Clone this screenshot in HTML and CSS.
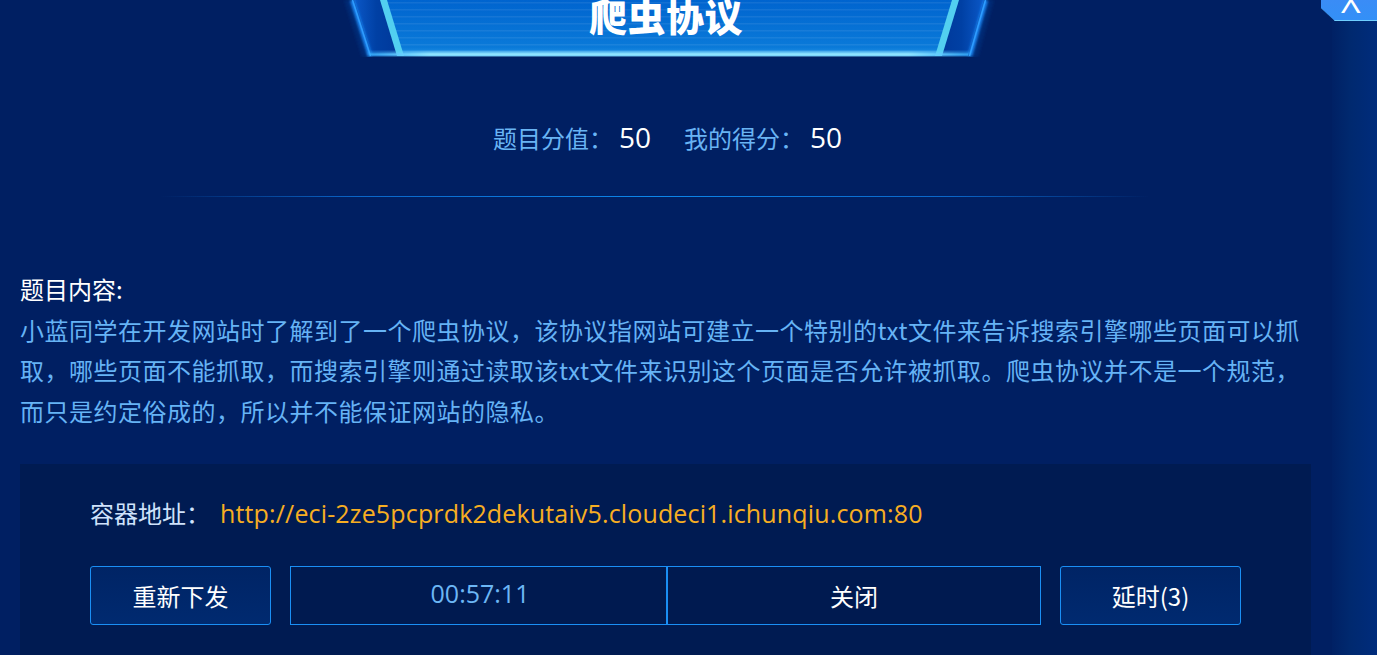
FILE: index.html
```html
<!DOCTYPE html>
<html lang="zh-CN">
<head>
<meta charset="utf-8">
<title>爬虫协议</title>
<link rel="stylesheet" href="styles.css">
</head>
<body>
<div class="modal">
  <header class="banner-row">
    <div class="banner">
      <svg class="banner-art" width="662" height="57" viewBox="0 0 662 57" aria-hidden="true">
        <defs>
          <linearGradient id="inner" x1="0" y1="0" x2="0" y2="1">
            <stop offset="0" stop-color="#0064cf"/>
            <stop offset="0.85" stop-color="#0a7ad9"/>
            <stop offset="1" stop-color="#2a9ae8"/>
          </linearGradient>
          <linearGradient id="sideL" x1="0" y1="0" x2="1" y2="0">
            <stop offset="0" stop-color="#0b58c8"/>
            <stop offset="0.5" stop-color="#0040a4"/>
            <stop offset="1" stop-color="#00389a"/>
          </linearGradient>
          <linearGradient id="sideR" x1="1" y1="0" x2="0" y2="0">
            <stop offset="0" stop-color="#0b58c8"/>
            <stop offset="0.5" stop-color="#0040a4"/>
            <stop offset="1" stop-color="#00389a"/>
          </linearGradient>
          <linearGradient id="base" x1="0" y1="0" x2="1" y2="0">
            <stop offset="0" stop-color="#3ab4ff" stop-opacity="0.6"/>
            <stop offset="0.1" stop-color="#8fe4ff"/>
            <stop offset="0.9" stop-color="#8fe4ff"/>
            <stop offset="1" stop-color="#3ab4ff" stop-opacity="0.6"/>
          </linearGradient>
          <pattern id="lines" width="8" height="7" patternUnits="userSpaceOnUse">
            <rect x="0" y="2" width="8" height="1.5" fill="#ffffff" fill-opacity="0.07"/>
          </pattern>
          <filter id="glow" x="-50%" y="-50%" width="200%" height="200%">
            <feGaussianBlur stdDeviation="1.6"/>
          </filter>
        </defs>
        <polygon points="6,0 656,0 640,57 24,57" fill="#0a3c96" fill-opacity="0.35" filter="url(#glow)"/>
        <polygon points="16,0 44,0 61,56 34,56" fill="url(#sideL)"/>
        <polygon points="618,0 646,0 630,56 601,56" fill="url(#sideR)"/>
        <polygon points="47,0 617,0 600,56 64,56" fill="url(#inner)"/>
        <polygon points="47,0 617,0 600,56 64,56" fill="url(#lines)"/>
        <line x1="14" y1="0" x2="32" y2="56" stroke="#1e8fff" stroke-width="4" filter="url(#glow)"/>
        <line x1="14.5" y1="0" x2="32.5" y2="56" stroke="#2f9cff" stroke-width="1.5"/>
        <line x1="648" y1="0" x2="632" y2="56" stroke="#1e8fff" stroke-width="4" filter="url(#glow)"/>
        <line x1="647.5" y1="0" x2="631.5" y2="56" stroke="#2f9cff" stroke-width="1.5"/>
        <polygon points="42,0 49,0 66,56 59,56" fill="#52cff0"/>
        <polygon points="614,0 621,0 604,56 597,56" fill="#52cff0"/>
        <rect x="30" y="52" width="602" height="4" fill="url(#base)" filter="url(#glow)"/>
        <rect x="32" y="53.5" width="598" height="2" fill="url(#base)"/>
      </svg>
      <h1 class="title">爬虫协议</h1>
    </div>
  </header>

  <div class="score">
    <span class="score-label">题目分值：</span><span class="score-num">50</span>
    <span class="score-label score-gap">我的得分：</span><span class="score-num">50</span>
  </div>

  <div class="divider"></div>

  <section class="content">
    <div class="content-title">题目内容:</div>
    <p class="content-text">小蓝同学在开发网站时了解到了一个爬虫协议，该协议指网站可建立一个特别的txt文件来告诉搜索引擎哪些页面可以抓取，哪些页面不能抓取，而搜索引擎则通过读取该txt文件来识别这个页面是否允许被抓取。爬虫协议并不是一个规范，而只是约定俗成的，所以并不能保证网站的隐私。</p>
  </section>

  <section class="env-box">
    <div class="env-addr">
      <span class="env-label">容器地址：</span><span class="env-url">http://eci-2ze5pcprdk2dekutaiv5.cloudeci1.ichunqiu.com:80</span>
    </div>
    <div class="env-actions">
      <button class="btn">重新下发</button>
      <div class="timer-group">
        <div class="timer-cell timer">00:57:11</div>
        <div class="timer-cell close">关闭</div>
      </div>
      <button class="btn">延时(3)</button>
    </div>
  </section>
</div>

<button class="close-x" aria-label="关闭"><span class="close-x-glyph">X</span></button>
</body>
</html>
```

FILE: styles.css
```css
* { box-sizing: border-box; }

html, body {
  margin: 0;
  padding: 0;
  height: 100%;
}

body {
  width: 1377px;
  height: 655px;
  overflow: hidden;
  position: relative;
  font-family: "Open Sans", "Noto Sans CJK SC", sans-serif;
  background: linear-gradient(to right, #001f62 0px, #001f62 1328px, #00296f 1350px, #002c7c 1377px);
  color: #fff;
}

.modal {
  width: 1332px;
  height: 655px;
  background: #001f62;
}

.banner-row {
  display: flex;
  justify-content: center;
  padding-left: 6px;
  height: 57px;
}

.banner {
  position: relative;
  width: 662px;
  height: 57px;
  display: flex;
  justify-content: center;
}

.banner-art {
  position: absolute;
  left: 0;
  top: 0;
}

.title {
  position: relative;
  margin: -5px 0 0 -6px;
  font-family: "Noto Sans CJK SC", sans-serif;
  font-weight: 900;
  font-size: 38px;
  line-height: 40px;
  color: #ffffff;
  letter-spacing: 0.5px;
}

.score {
  margin-top: 62px;
  height: 36px;
  display: flex;
  justify-content: center;
  align-items: baseline;
  padding-left: 3px;
  font-size: 24px;
  line-height: 36px;
}

.score-label {
  color: #69b4f4;
  font-family: "Noto Sans CJK SC", sans-serif;
  font-size: 24px;
}

.score-num {
  color: #ffffff;
  font-size: 28px;
  margin-left: 6px;
}

.score-gap {
  margin-left: 33px;
}

.divider {
  margin: 41px 0 0 160px;
  width: 990px;
  height: 1px;
  background: linear-gradient(to right, rgba(10, 110, 220, 0), #0a65c8 20%, #0c86ea 50%, #0a65c8 80%, rgba(10, 110, 220, 0));
}

.content {
  margin-top: 72px;
  padding: 0 20px;
  width: 1320px;
}

.content-title {
  font-family: "Noto Sans CJK SC", sans-serif;
  font-size: 24px;
  line-height: 40.5px;
  height: 40.5px;
  color: #ffffff;
}

.content-text {
  margin: 0;
  font-family: "Noto Sans CJK SC", sans-serif;
  font-size: 24px;
  line-height: 40.5px;
  letter-spacing: 0.5px;
  color: #66b3f5;
}

.env-box {
  margin: 33px 0 0 20px;
  width: 1291px;
  height: 200px;
  background: #001b52;
  padding: 31px 0 0 70px;
}

.env-addr {
  height: 36px;
  display: flex;
  align-items: baseline;
  font-size: 24px;
  line-height: 36px;
}

.env-label {
  font-family: "Noto Sans CJK SC", sans-serif;
  color: #cfe2fb;
}

.env-url {
  color: #f7ae22;
  font-size: 25px;
  letter-spacing: 0.15px;
  margin-left: 10px;
}

.env-actions {
  margin-top: 35px;
  display: flex;
  gap: 19px;
}

.btn {
  width: 181px;
  height: 59px;
  border: 1px solid #1a8ff5;
  border-radius: 3px;
  background: linear-gradient(to bottom, #002465, #002a70);
  color: #ffffff;
  font-family: "Noto Sans CJK SC", sans-serif;
  font-size: 24px;
  padding: 0;
}

.timer-group {
  display: flex;
  width: 751px;
  height: 59px;
  border: 1px solid #1a8ff5;
  background: #001a50;
}

.timer-cell {
  flex: 1 1 0;
  min-width: 0;
  display: flex;
  align-items: center;
  justify-content: center;
  font-size: 24px;
}

.timer-cell + .timer-cell {
  border-left: 2px solid #1a8ff5;
}

.timer {
  color: #6cb6f5;
  font-family: "Open Sans", sans-serif;
  font-size: 25px;
  padding-bottom: 6px;
  padding-left: 3px;
}

.close {
  color: #ffffff;
  font-family: "Noto Sans CJK SC", sans-serif;
}

.close-x {
  position: absolute;
  top: 0;
  left: 1321px;
  width: 60px;
  height: 21px;
  border: none;
  padding: 0 0 0 20px;
  background: linear-gradient(to bottom, #3a8cf6, #3390f7);
  clip-path: polygon(0 0, 100% 0, 100% 100%, 14px 100%, 0 8px);
  overflow: hidden;
  box-shadow: inset 0 -1px 0 #6fcfff;
  text-align: left;
}

.close-x::before {
  content: "";
  position: absolute;
  left: 0;
  top: 8px;
  width: 19px;
  height: 2px;
  background: #5fd0ff;
  transform-origin: 0 0;
  transform: rotate(43deg);
}

.close-x-glyph {
  display: block;
  margin-top: -21px;
  font-family: "Open Sans", sans-serif;
  font-size: 34px;
  line-height: 32px;
  color: #ffffff;
}
```
